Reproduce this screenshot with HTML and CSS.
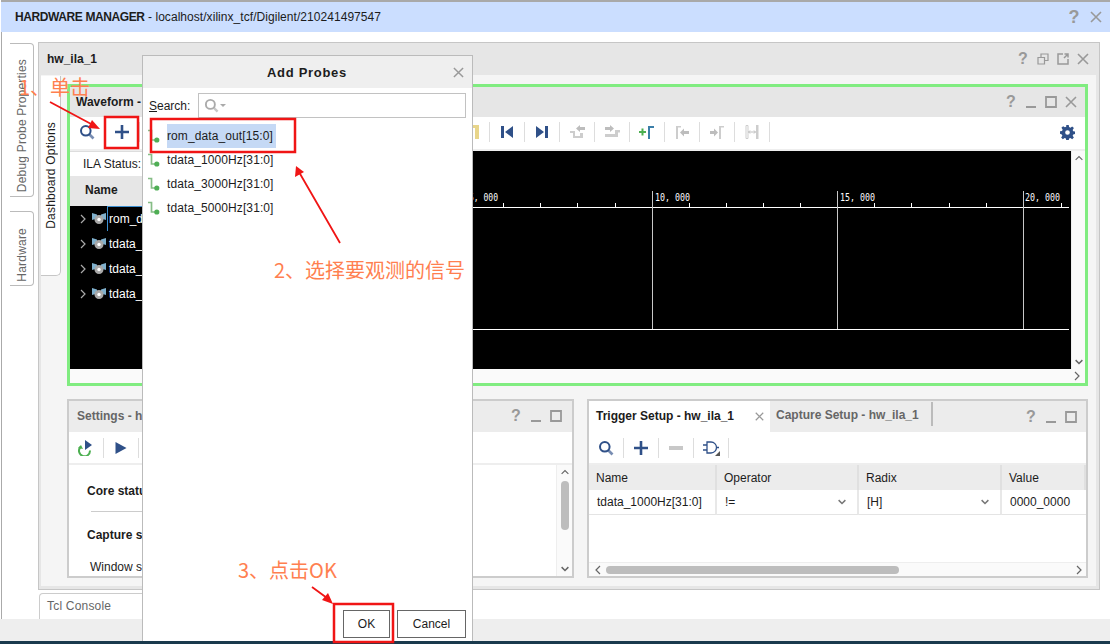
FILE: index.html
```html
<!DOCTYPE html>
<html lang="en">
<head>
    <meta charset="UTF-8">
    <title>Hardware Manager - Add Probes</title>
    <link rel="stylesheet" href="styles.css">
</head>
<body>
    <svg class="defs" width="0" height="0">
        <symbol id="i-search" viewBox="0 0 16 16">
            <circle cx="6.800" cy="6.800" r="4.800" fill="none" stroke="currentColor" stroke-width="2"/>
            <path d="M10.500 10.500L14.500 14.500" stroke="currentColor" stroke-opacity=".65" stroke-width="2.600"/>
        </symbol>
        <symbol id="i-plus" viewBox="0 0 16 16">
            <path d="M8 1v14M1 8h14" stroke="currentColor" stroke-width="2.600"/>
        </symbol>
        <symbol id="i-close" viewBox="0 0 12 12">
            <path d="M1 1l10 10M11 1L1 11" stroke="currentColor" stroke-width="1.600"/>
        </symbol>
        <symbol id="i-min" viewBox="0 0 12 12">
            <path d="M1 11h10" stroke="currentColor" stroke-width="2"/>
        </symbol>
        <symbol id="i-max" viewBox="0 0 12 12">
            <path d="M1 1h10v10H1z" fill="none" stroke="currentColor" stroke-width="1.800"/>
        </symbol>
        <symbol id="i-chev" viewBox="0 0 12 8">
            <path d="M1.500 1.500L6 6l4.500-4.500" fill="none" stroke="currentColor" stroke-width="2"/>
        </symbol>
        <symbol id="i-signal" viewBox="0 0 12 14">
            <path d="M0 1.500h3.500v9.500h5" fill="none" stroke="#86bd86" stroke-width="1.700"/>
            <circle cx="8.800" cy="11" r="2.600" fill="#4fae55"/>
        </symbol>
        <symbol id="i-bus" viewBox="0 0 14 14">
            <path d="M0 1l5 1.500v4L0 8zM14 1L9 2.500v4L14 8z" fill="#7fb0cc"/>
            <circle cx="7" cy="7.500" r="4.500" fill="#a8a8a8"/>
            <circle cx="7" cy="7.500" r="1.700" fill="#fff"/>
        </symbol>
    </svg>

    <div class="window">
        <div class="titlebar">
            <span class="title"><b>HARDWARE MANAGER</b> - localhost/xilinx_tcf/Digilent/210241497547</span>
            <span class="btn-group gap-title">
                <span class="help big">?</span>
                <svg class="ico12" width="12" height="12"><use href="#i-close"/></svg>
            </span>
        </div>

        <div class="main">
            <div class="side-tabs">
                <div class="side-tab tab-debug"><span>Debug Probe Properties</span></div>
                <div class="side-tab tab-hw"><span>Hardware</span></div>
            </div>

            <div class="panel">
                <div class="panel-head">
                    <b>hw_ila_1</b>
                    <span class="btn-group">
                        <span class="help">?</span>
                        <svg class="ico12" width="12" height="12" viewBox="0 0 12 12"><path d="M1 4.500h6.500V11H1zM4 4.500V1h7v6.500H7.500" fill="none" stroke="currentColor" stroke-width="1.200"/></svg>
                        <svg class="ico12" width="12" height="12" viewBox="0 0 12 12"><path d="M6 1H1v10h10V6M7 5l4-4M7.500 1H11v3.500" fill="none" stroke="currentColor" stroke-width="1.500"/></svg>
                        <svg class="ico12" width="12" height="12"><use href="#i-close"/></svg>
                    </span>
                </div>

                <div class="panel-body">
                    <div class="dash-tab"><span>Dashboard Options</span></div>

                    <div class="content">
                        <section class="waveform">
                            <div class="wave-head">
                                <b>Waveform - hw_ila_1</b>
                                <span class="btn-group">
                                    <span class="help">?</span>
                                    <svg class="ico12" width="12" height="12"><use href="#i-min"/></svg>
                                    <svg class="ico12" width="12" height="12"><use href="#i-max"/></svg>
                                    <svg class="ico12" width="12" height="12"><use href="#i-close"/></svg>
                                </span>
                            </div>

                            <div class="toolbar wave-tools">
                                <span class="tool"><svg class="ico16" width="16" height="16"><use href="#i-search"/></svg></span>
                                <span class="tool"><svg class="ico16" width="16" height="16"><use href="#i-plus"/></svg></span>
                                <span class="tool"></span><span class="tool"></span><span class="tool"></span>
                                <span class="tool"></span><span class="tool"></span><span class="tool"></span>
                                <span class="tool"></span><span class="tool"></span><span class="tool"></span>
                                <span class="tool"><svg width="14" height="14" viewBox="0 0 14 14"><path d="M2 0h12v14h-4V3H2z" fill="#e8d58a"/></svg></span>
                                <span class="tool"><svg width="14" height="14" viewBox="0 0 14 14"><path d="M1 1h3v12H1zM13 1v12L5 7z" fill="#2f5088"/></svg></span>
                                <span class="tool"><svg width="14" height="14" viewBox="0 0 14 14"><path d="M1 1v12l8-6zM10 1h3v12h-3z" fill="#2f5088"/></svg></span>
                                <span class="tool"><svg width="15" height="14" viewBox="0 0 15 14"><path d="M0 6h5v5h5V8h3v5H3V8H0z" fill="#cdcdcd"/><path d="M6 3.500L10 0v2h5v3h-5v2z" fill="#bdbdbd"/></svg></span>
                                <span class="tool"><svg width="15" height="14" viewBox="0 0 15 14"><path d="M0 2h5V0l4 3.500L5 7V5H0z" fill="#bdbdbd"/><path d="M0 9h10V5h5v2.500h-2V12H0z" fill="#cdcdcd"/></svg></span>
                                <span class="tool"><svg width="16" height="14" viewBox="0 0 16 14"><path d="M0 6h2.500V3.500h2V6H7v2H4.500v2.500h-2V8H0z" fill="#4caf50"/><path d="M9 14V1h6v2h-4v11z" fill="#3b7ea8"/></svg></span>
                                <span class="tool"><svg width="14" height="14" viewBox="0 0 14 14"><path d="M1 14V1h5v1.500H3V14z" fill="#cdcdcd"/><path d="M14 6H9V3.500L5 7.500l4 4V9h5z" fill="#bdbdbd"/></svg></span>
                                <span class="tool"><svg width="14" height="14" viewBox="0 0 14 14"><path d="M0 6h4V3.500l4 4-4 4V9H0z" fill="#bdbdbd"/><path d="M9 14V1h5v1.500h-3V14z" fill="#cdcdcd"/></svg></span>
                                <span class="tool"><svg width="14" height="14" viewBox="0 0 14 14"><path d="M1 .5h2v13H1z" fill="none" stroke="#cdcdcd"/><path d="M11 0h2.500v14H11z" fill="#cdcdcd"/><path d="M3.500 7h7M5 5.500L3.500 7 5 8.500M9 5.500L10.500 7 9 8.500" fill="none" stroke="#bdbdbd"/></svg></span>
                                <span class="tool-fill"></span>
                                <svg class="gear" width="15" height="15" viewBox="0 0 16 16"><path d="M6.700 0h2.600l.4 2.200 1.400.6 1.900-1.300 1.800 1.800-1.300 1.900.6 1.400 2.200.4v2.600l-2.200.4-.6 1.400 1.300 1.900-1.800 1.800-1.900-1.300-1.400.6-.4 2.200H6.700l-.4-2.200-1.400-.6-1.900 1.300-1.800-1.800 1.300-1.900-.6-1.400L0 9.300V6.700l2.200-.4.6-1.400L1.500 3l1.800-1.800 1.900 1.300 1.400-.6zM8 5.500a2.500 2.500 0 100 5 2.500 2.500 0 000-5z" fill="#2f5088" fill-rule="evenodd"/></svg>
                            </div>

                            <div class="wave-body">
                                <div class="wave-view">
                                    <div class="wave-names">
                                        <div class="ila-status">ILA Status:</div>
                                        <div class="name-head"><b>Name</b></div>
                                        <div class="name-list">
                                            <div class="name-row"><svg class="row-arrow" width="6" height="10" viewBox="0 0 6 10"><path d="M1 1l4 4-4 4" fill="none" stroke="#aaa" stroke-width="1.200"/></svg><svg width="14" height="14"><use href="#i-bus"/></svg><span class="row-label selected">rom_data_out[15:0]</span></div>
                                            <div class="name-row"><svg class="row-arrow" width="6" height="10" viewBox="0 0 6 10"><path d="M1 1l4 4-4 4" fill="none" stroke="#aaa" stroke-width="1.200"/></svg><svg width="14" height="14"><use href="#i-bus"/></svg><span class="row-label">tdata_1000Hz[31:0]</span></div>
                                            <div class="name-row"><svg class="row-arrow" width="6" height="10" viewBox="0 0 6 10"><path d="M1 1l4 4-4 4" fill="none" stroke="#aaa" stroke-width="1.200"/></svg><svg width="14" height="14"><use href="#i-bus"/></svg><span class="row-label">tdata_3000Hz[31:0]</span></div>
                                            <div class="name-row"><svg class="row-arrow" width="6" height="10" viewBox="0 0 6 10"><path d="M1 1l4 4-4 4" fill="none" stroke="#aaa" stroke-width="1.200"/></svg><svg width="14" height="14"><use href="#i-bus"/></svg><span class="row-label">tdata_5000Hz[31:0]</span></div>
                                        </div>
                                    </div>
                                    <svg class="wave-canvas" width="929" height="218" viewBox="142 151 929 218">
                                        <path d="M142 207.500H1069M142 329.500H1069" stroke="#fff"/>
                                        <path d="M467.500 191V329M652.500 191V329M837.500 191V329M1023.500 191V329" stroke="#c8c8c8"/>
                                        <path d="M503.500 203v4M540.500 203v4M577.500 203v4M615.500 203v4M689.500 203v4M726.500 203v4M763.500 203v4M800.500 203v4M874.500 203v4M911.500 203v4M949.500 203v4M986.500 203v4M1061.500 203v4" stroke="#fff"/>
                                        <text x="469" y="201" textLength="29" lengthAdjust="spacingAndGlyphs">5, 000</text>
                                        <text x="655" y="201" textLength="35" lengthAdjust="spacingAndGlyphs">10, 000</text>
                                        <text x="840" y="201" textLength="35" lengthAdjust="spacingAndGlyphs">15, 000</text>
                                        <text x="1025" y="201" textLength="35" lengthAdjust="spacingAndGlyphs">20, 000</text>
                                    </svg>
                                    <div class="vscroll">
                                        <svg class="ico-chev" width="10" height="6" viewBox="0 0 12 8"><path d="M1.500 6.500L6 2l4.500 4.500" fill="none" stroke="#666" stroke-width="1.500"/></svg>
                                        <svg class="ico-chev" width="10" height="6"><use href="#i-chev"/></svg>
                                    </div>
                                </div>
                                <div class="hscroll wave-hscroll">
                                    <svg width="6" height="10" viewBox="0 0 6 10"><path d="M1 1l4 4-4 4" fill="none" stroke="#666" stroke-width="1.200"/></svg>
                                </div>
                            </div>
                        </section>

                        <div class="bottom-panels">
                            <section class="sub-panel">
                                <div class="sub-head">
                                    <span class="sub-title">Settings - hw_ila_1</span>
                                    <span class="btn-group">
                                        <span class="help">?</span>
                                        <svg class="ico12" width="12" height="12"><use href="#i-min"/></svg>
                                        <svg class="ico12" width="12" height="12"><use href="#i-max"/></svg>
                                    </span>
                                </div>
                                <div class="toolbar sub-tools">
                                    <span class="tool"><svg width="16" height="16" viewBox="0 0 16 16"><path d="M7 0l7 5-7 5z" fill="#2f5088"/><path d="M2.500 7a5.500 5.500 0 109.500 3.500" fill="none" stroke="#4caf50" stroke-width="2"/><path d="M0 8l3-3 2 4z" fill="#4caf50"/></svg></span>
                                    <span class="tool"><svg width="14" height="14" viewBox="0 0 14 14"><path d="M1.500 1v12L12.500 7z" fill="#2f5088"/></svg></span>
                                    <span class="tool"></span>
                                </div>
                                <div class="settings-body">
                                    <div class="settings-text">
                                        <div class="set-line set-core"><b>Core status</b></div>
                                        <hr class="set-rule">
                                        <div class="set-line set-capture"><b>Capture status</b></div>
                                        <div class="set-line set-window">Window size</div>
                                    </div>
                                    <div class="vscroll settings-scroll">
                                        <svg class="ico-chev" width="10" height="6" viewBox="0 0 12 8"><path d="M1.500 6.500L6 2l4.500 4.500" fill="none" stroke="#666" stroke-width="1.500"/></svg>
                                        <span class="v-thumb"></span>
                                        <svg class="ico-chev" width="10" height="6"><use href="#i-chev"/></svg>
                                    </div>
                                </div>
                            </section>

                            <section class="sub-panel">
                                <div class="sub-head trigger-head">
                                    <span class="tab-active"><b>Trigger Setup - hw_ila_1</b><svg class="tab-x" width="9" height="9"><use href="#i-close"/></svg></span>
                                    <span class="tab-idle">Capture Setup - hw_ila_1</span>
                                    <span class="btn-group">
                                        <span class="help">?</span>
                                        <svg class="ico12" width="12" height="12"><use href="#i-min"/></svg>
                                        <svg class="ico12" width="12" height="12"><use href="#i-max"/></svg>
                                    </span>
                                </div>
                                <div class="toolbar sub-tools">
                                    <span class="tool"><svg class="ico16" width="16" height="16"><use href="#i-search"/></svg></span>
                                    <span class="tool"><svg class="ico16" width="16" height="16"><use href="#i-plus"/></svg></span>
                                    <span class="tool"><svg width="14" height="4" viewBox="0 0 14 4"><path d="M0 0h14v4H0z" fill="#c8c8c8"/></svg></span>
                                    <span class="tool"><svg width="18" height="16" viewBox="0 0 18 16"><path d="M5 2h4a5.500 5.500 0 010 11H5zM1 5h4M1 10h4M14.500 7.500H17" fill="none" stroke="#2f5088" stroke-width="1.300"/><path d="M18 16h-5l5-5z" fill="#555"/></svg></span>
                                </div>
                                <div class="probe-table">
                                    <div class="th">Name</div>
                                    <div class="th">Operator</div>
                                    <div class="th">Radix</div>
                                    <div class="th">Value</div>
                                    <div class="td">tdata_1000Hz[31:0]</div>
                                    <div class="td td-select">!=<svg class="select-chev" width="10" height="6"><use href="#i-chev"/></svg></div>
                                    <div class="td td-select">[H]<svg class="select-chev" width="10" height="6"><use href="#i-chev"/></svg></div>
                                    <div class="td">0000_0000</div>
                                </div>
                                <div class="table-fill"></div>
                                <div class="hscroll trigger-hscroll">
                                    <svg width="6" height="10" viewBox="0 0 6 10"><path d="M5 1L1 5l4 4" fill="none" stroke="#666" stroke-width="1.200"/></svg>
                                    <span class="h-thumb"></span>
                                    <svg width="6" height="10" viewBox="0 0 6 10"><path d="M1 1l4 4-4 4" fill="none" stroke="#666" stroke-width="1.200"/></svg>
                                </div>
                            </section>
                        </div>
                    </div>
                </div>
            </div>
        </div>

        <div class="console-row"><span class="console-tab">Tcl Console</span></div>
        <div class="statusbar"></div>
    </div>
    <div class="taskbar"></div>

    <div class="dialog">
        <div class="dialog-head">
            <b>Add Probes</b>
            <svg class="dialog-x" width="11" height="11" viewBox="0 0 12 12"><use href="#i-close"/></svg>
        </div>
        <div class="search-row">
            <label class="search-label"><u>S</u>earch:</label>
            <div class="search-box">
                <svg width="15" height="15"><use href="#i-search"/></svg>
                <svg width="6" height="3" viewBox="0 0 6 3"><path d="M0 0h6L3 3z" fill="#aaa"/></svg>
            </div>
        </div>
        <ul class="probe-list">
            <li class="probe"><svg width="12" height="14"><use href="#i-signal"/></svg><span class="probe-name picked">rom_data_out[15:0]</span></li>
            <li class="probe"><svg width="12" height="14"><use href="#i-signal"/></svg><span class="probe-name">tdata_1000Hz[31:0]</span></li>
            <li class="probe"><svg width="12" height="14"><use href="#i-signal"/></svg><span class="probe-name">tdata_3000Hz[31:0]</span></li>
            <li class="probe"><svg width="12" height="14"><use href="#i-signal"/></svg><span class="probe-name">tdata_5000Hz[31:0]</span></li>
        </ul>
        <div class="dialog-foot">
            <button class="btn btn-ok">OK</button>
            <button class="btn btn-cancel">Cancel</button>
        </div>
    </div>

    <svg class="marks" width="1110" height="644" viewBox="0 0 1110 644">
        <rect x="105" y="117" width="33" height="31"/>
        <rect x="151" y="119" width="144" height="33"/>
        <rect x="334" y="604" width="59" height="38"/>
        <path d="M50 102L93 125M340 243L299 172M312 587L327 598"/>
        <polygon points="100,129 88,128 92,120"/>
        <polygon points="296,166 304,172 295,177"/>
        <polygon points="333,604 322,600 328,593"/>
    </svg>
    <span class="note note-1">1、单击</span>
    <span class="note note-2">2、选择要观测的信号</span>
    <span class="note note-3">3、点击OK</span>
</body>
</html>
```

FILE: styles.css
```css
* {
    box-sizing: border-box;
}

html, body {
    margin: 0;
    height: 644px;
    overflow: hidden;
}

body {
    position: relative;
    width: 1110px;
    background: #fff;
    color: #1c1c1c;
    font-family: "Liberation Sans", Arial, sans-serif;
    font-size: 12px;
}

.defs {
    position: absolute;
}

svg {
    flex: none;
}

.window {
    margin-left: 1px;
    height: 641px;
    border-left: 1px solid #aaa;
    display: flex;
    flex-direction: column;
}

/* top bar */
.titlebar {
    height: 32px;
    flex: none;
    border-top: 2px solid #a9a9a9;
    margin-left: -1px;
    background: #cbdeff;
    display: flex;
    align-items: center;
    padding-left: 14px;
    padding-right: 8px;
    justify-content: space-between;
}

.title {
    letter-spacing: 0.05px;
}

.title b {
    letter-spacing: -0.4px;
}

.btn-group {
    display: flex;
    align-items: center;
    gap: 8px;
    color: #999;
}

.gap-title {
    gap: 10px;
}

.help {
    width: 12px;
    text-align: center;
    font-size: 16px;
    font-weight: bold;
    color: #999;
    line-height: 16px;
}

.help.big {
    font-size: 18px;
}

.ico12 {
    display: block;
}

/* main area */
.main {
    flex: none;
    height: 561px;
    padding: 10px 10px 0 8px;
    display: flex;
    gap: 4px;
}

.side-tabs {
    width: 24px;
    flex: none;
    display: flex;
    flex-direction: column;
    gap: 14px;
    padding-top: 1px;
}

.side-tab {
    border: 1px solid #bbb;
    border-left: none;
    border-radius: 0 4px 4px 0;
    background: #fff;
    display: flex;
    justify-content: center;
    align-items: center;
    color: #666;
    padding-top: 12px;
}

.side-tab span, .dash-tab span {
    writing-mode: vertical-rl;
    transform: rotate(180deg);
    white-space: nowrap;
    letter-spacing: 0.2px;
}

.tab-debug {
    height: 154px;
}

.tab-hw {
    height: 75px;
}

.panel {
    flex: 1;
    height: 548px;
    border: 1px solid #c6c6c6;
    background: #e6e6e6;
    padding: 0 3px 3px 2px;
    display: flex;
    flex-direction: column;
}

.panel-head {
    height: 32px;
    flex: none;
    padding: 0 10px 0 8px;
    margin-right: -3px;
    margin-left: -2px;
    display: flex;
    justify-content: space-between;
    align-items: center;
    background: #e6e6e6;
}

.panel-head .btn-group {
    gap: 8px;
}

.panel-body {
    flex: 1;
    background: #f5f5f5;
    display: flex;
    padding: 1px 8px 0 0;
}

.dash-tab {
    width: 20px;
    height: 200px;
    flex: none;
    background: #fff;
    border: 1px solid #c6c6c6;
    border-left: none;
    border-top: none;
    border-radius: 0 0 5px 0;
    display: flex;
    justify-content: center;
    align-items: center;
}

.content {
    flex: 1;
    margin-left: 6px;
    padding-top: 8px;
    min-width: 0;
}

/* waveform window */
.waveform {
    height: 302px;
    border: 3px solid #80ec80;
    background: #fff;
    display: flex;
    flex-direction: column;
}

.wave-head {
    height: 30px;
    flex: none;
    background: #e6e6e6;
    display: flex;
    justify-content: space-between;
    align-items: center;
    padding: 0 8px 0 6px;
}

.toolbar {
    display: flex;
    align-items: center;
    flex: none;
    background: #fff;
}

.wave-tools {
    height: 34px;
    padding-bottom: 2px;
    border-bottom: 2px solid #eee;
}

.tool {
    width: 35px;
    height: 20px;
    flex: none;
    border-right: 1px solid #ddd;
    display: flex;
    align-items: center;
    justify-content: center;
    color: #2f5088;
}

.tool-fill {
    flex: 1;
}

.gear {
    margin-right: 10px;
}

.wave-body {
    flex: 1;
    display: flex;
    flex-direction: column;
    min-height: 0;
}

.wave-view {
    height: 218px;
    display: flex;
    background: #000;
}

.wave-names {
    width: 72px;
    flex: none;
    color: #fff;
    overflow: hidden;
}

.ila-status {
    height: 25px;
    background: #fff;
    color: #1c1c1c;
    line-height: 24px;
    padding-left: 13px;
    border-top: 1px solid #ddd;
}

.name-head {
    height: 30px;
    background: #e6e6e6;
    color: #1c1c1c;
    line-height: 29px;
    padding-left: 15px;
}

.name-row {
    height: 25px;
    display: flex;
    align-items: center;
    gap: 6px;
    padding-left: 10px;
    white-space: nowrap;
    overflow: hidden;
}

.row-label {
    margin-left: -5px;
    padding: 0 2px;
    line-height: 24px;
}

.row-label.selected {
    border: 1px solid #3c8fd0;
    padding: 0 1px;
}

.wave-canvas {
    flex: none;
}

.wave-canvas text {
    fill: #fff;
    font-family: "DejaVu Sans Mono", monospace;
    font-size: 11px;
}

.vscroll {
    width: 14px;
    flex: none;
    background: #fafafa;
    border-left: 1px solid #eee;
    display: flex;
    flex-direction: column;
    justify-content: space-between;
    align-items: center;
    padding: 4px 0;
    color: #666;
}

.hscroll {
    display: flex;
    align-items: center;
    justify-content: space-between;
    background: #fafafa;
    flex: none;
}

.wave-hscroll {
    height: 14px;
    justify-content: flex-end;
    padding-right: 5px;
}

/* lower panels */
.bottom-panels {
    display: grid;
    grid-template-columns: 507px 1fr;
    gap: 13px;
    height: 179px;
    margin-top: 13px;
}

.sub-panel {
    border: 2px solid #ccc;
    background: #fff;
    display: flex;
    flex-direction: column;
    min-width: 0;
}

.sub-head {
    height: 31px;
    flex: none;
    background: #ececec;
    display: flex;
    align-items: center;
    justify-content: space-between;
    padding: 0 10px 1px 8px;
}

.sub-title {
    font-weight: bold;
    color: #666;
}

.sub-tools {
    height: 33px;
    border-bottom: 2px solid #eee;
}

.settings-body {
    flex: 1;
    display: flex;
    min-height: 0;
}

.settings-text {
    flex: 1;
    position: relative;
    padding-left: 18px;
    white-space: nowrap;
}

.set-core {
    margin-top: 19px;
}

.set-rule {
    width: 120px;
    margin: 13px 0 16px 4px;
    border: none;
    border-top: 1px solid #ccc;
}

.set-window {
    margin-top: 18px;
    margin-left: 3px;
}

.settings-scroll {
    width: 16px;
    justify-content: flex-start;
    border-left: 1px solid #eee;
}

.v-thumb {
    width: 8px;
    height: 49px;
    background: #bdbdbd;
    border-radius: 4px;
    margin: 6px 0 auto;
}

.trigger-head {
    justify-content: flex-start;
    padding: 0 9px 0 0;
}

.tab-active {
    width: 181px;
    height: 100%;
    background: #fff;
    padding-left: 7px;
    display: flex;
    align-items: center;
    justify-content: space-between;
    padding-right: 6px;
    padding-bottom: 1px;
}

.tab-x {
    color: #999;
}

.tab-idle {
    font-weight: bold;
    color: #666;
    width: 163px;
    height: 24px;
    margin: 0 auto 6px 0;
    padding-left: 6px;
    line-height: 27px;
    border-right: 2px solid #bbb;
}

.probe-table {
    display: grid;
    grid-template-columns: 128px 142px 143px 1fr;
    flex: none;
}

.th {
    height: 25px;
    background: #ececec;
    line-height: 26px;
    padding-left: 7px;
    border-right: 2px solid #e0e0e0;
}

.th:last-of-type, .td:last-child {
    border-right: none;
}

.td {
    height: 25px;
    line-height: 24px;
    padding-left: 8px;
    border-right: 2px solid #e8e8e8;
    border-bottom: 1px solid #e4e4e4;
    position: relative;
}

.td-select {
    display: flex;
    align-items: center;
    justify-content: space-between;
    padding-right: 10px;
    color: #1c1c1c;
}

.select-chev {
    color: #777;
}

.table-fill {
    flex: 1;
}

.trigger-hscroll {
    height: 14px;
    padding: 0 4px 0 6px;
    gap: 5px;
    border-top: 1px solid #eee;
}

.h-thumb {
    width: 293px;
    height: 8px;
    background: #bdbdbd;
    border-radius: 4px;
    margin-right: auto;
}

.console-row {
    height: 26px;
    flex: none;
    padding-left: 37px;
    align-self: stretch;
}

.console-tab {
    display: block;
    width: 110px;
    height: 26px;
    border: 1px solid #ccc;
    border-bottom: none;
    border-radius: 4px 4px 0 0;
    color: #666;
    padding: 5px 0 0 7px;
    letter-spacing: 0.2px;
}

.statusbar {
    flex: 1;
    margin-left: -2px;
    background: #eee;
}

.taskbar {
    height: 3px;
    background: #1a3a4d;
}

/* Add Probes dialog */
.dialog {
    position: absolute;
    left: 142px;
    top: 55px;
    width: 331px;
    height: 586px;
    background: #fff;
    border: 1px solid #bbb;
    border-bottom: none;
    display: flex;
    flex-direction: column;
}

.dialog-head {
    height: 32px;
    flex: none;
    background: #efefef;
    display: flex;
    align-items: center;
    justify-content: center;
    position: relative;
    font-size: 13px;
    letter-spacing: 0.7px;
    padding-right: 1px;
}

.dialog-x {
    position: absolute;
    right: 8px;
    top: 11px;
    color: #999;
}

.search-row {
    display: flex;
    align-items: center;
    height: 25px;
    margin-top: 5px;
    padding: 0 6px;
    flex: none;
}

.search-label {
    width: 49px;
}

.search-box {
    flex: 1;
    height: 25px;
    border: 1px solid #c2c2c2;
    display: flex;
    align-items: center;
    gap: 1px;
    padding-left: 5px;
    color: #aaa;
}

.probe-list {
    list-style: none;
    margin: 6px 0 0;
    padding: 0;
    flex: 1;
}

.probe {
    height: 24px;
    display: flex;
    align-items: center;
    padding-left: 5px;
    gap: 7px;
}

.probe-name {
    padding-right: 3px;
    line-height: 24px;
    letter-spacing: 0.1px;
}

.probe-name.picked {
    background: #c5d9f5;
}

.dialog-foot {
    display: flex;
    justify-content: flex-end;
    gap: 7px;
    padding-right: 6px;
    height: 31px;
    flex: none;
}

.btn {
    height: 28px;
    border: 1px solid #666;
    background: #fff;
    font: inherit;
    color: #1c1c1c;
    padding: 0;
}

.btn-ok {
    width: 47px;
}

.btn-cancel {
    width: 69px;
}

/* red annotations on top of the screenshot */
.marks {
    position: absolute;
    left: 0;
    top: 0;
    pointer-events: none;
}

.marks rect {
    fill: none;
    stroke: #f01515;
    stroke-width: 2.500;
}

.marks path {
    fill: none;
    stroke: #f01515;
    stroke-width: 1.800;
}

.marks polygon {
    fill: #f01515;
}

.note {
    position: absolute;
    color: #ff7f50;
    font-family: "Noto Sans CJK SC", "Liberation Sans", sans-serif;
    font-size: 20px;
    line-height: 28px;
    white-space: nowrap;
}

.note-1 {
    left: 19px;
    top: 73px;
}

.note-2 {
    left: 274px;
    top: 256px;
}

.note-3 {
    left: 238px;
    top: 556px;
}
```
